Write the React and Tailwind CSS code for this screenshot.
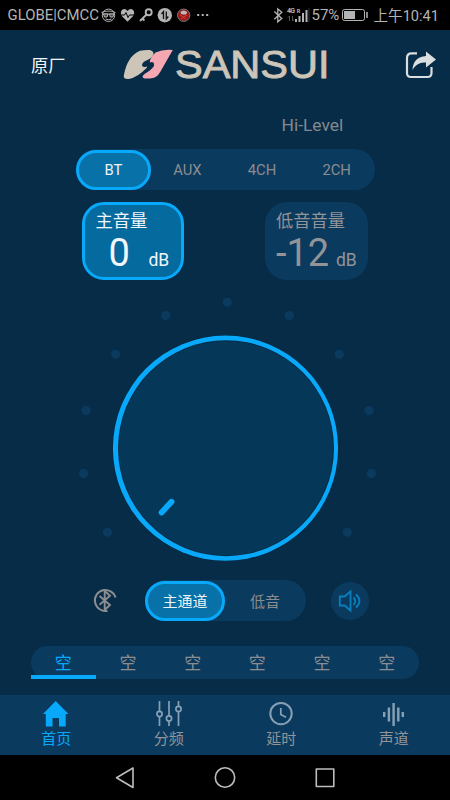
import React, { useState } from 'react';

const dots = [
  [227.3, 302.3], [165.7, 315.5], [289.3, 315.5], [115.7, 354.3], [339.3, 354.3],
  [86, 410.5], [369, 410.5], [83.5, 473.5], [371.3, 473.5], [107.5, 532.3], [347.3, 532.3],
];

function StatusBar() {
  return (
    <div className="h-[30px] bg-black text-[#b4b4b4] flex items-center pl-[7.5px] pr-[11px] leading-none">
      <span className="text-[14.9px] w-[92px] pt-px whitespace-nowrap">GLOBE|CMCC</span>
      <svg className="w-[110px] h-[30px]" viewBox="99.5 0 110 30" fill="none" stroke="#b4b4b4">
        <circle cx="108" cy="15.3" r="6.2" strokeWidth="1" />
        <path d="M101 12.5 Q108 9.5 115 12.5 M102 14h12" strokeWidth="1.2" />
        <path d="M103 14h4.4l-.8 3h-2.6zM109 14h4.4l-1 3h-2.6z" fill="#444" strokeWidth="1" />
        <path d="M105 19q3 1.4 6 0" />
        <path d="M127 21.8L121.3 16Q119.3 12.5 121.5 10Q124.5 7.6 127 11Q129.7 7.6 132.6 10Q134.7 12.5 132.7 16Z" fill="#b4b4b4" stroke="none" />
        <path d="M120 15h4l1.5-2.5 2 5 1.5-2.5h5" stroke="#000" />
        <circle cx="148.2" cy="12.2" r="3" strokeWidth="1.9" />
        <path d="M146 14.5L139.5 21M141.5 18.5l2.5 2" strokeWidth="1.9" />
        <circle cx="164.3" cy="15.2" r="7.2" fill="#b4b4b4" stroke="none" />
        <path d="M163 19v-7.5l-2 2.5M165.8 11.5v7.5l2-2.5" stroke="#111" strokeWidth="1.3" />
        <circle cx="183.2" cy="15.2" r="6.2" fill="#961d1d" stroke="#777" />
        <path d="M180 12q0 3 3.2 2.5Q186.5 15 186.5 12Q183.2 9 180 12Z" fill="#bbb" stroke="none" />
        <path d="M179.5 15l3.5 2 3.5-2M181 19l2-2 2 2" stroke="#e33b38" />
        <path d="M196.7 15h2M201.2 15h2M205.7 15h2" strokeWidth="1.8" />
      </svg>
      <svg className="w-[38px] ml-auto h-[30px]" viewBox="273 0 38 30" fill="none" stroke="#b4b4b4">
        <path d="M274.3 11.5l7.5 7-4 3.3V9l4 3.300-7.500 7" strokeWidth="1.3" />
        <text x="287" y="13.2" fontSize="7" fontWeight="bold" fill="#b4b4b4" stroke="none" textLength="8">4G</text>
        <text x="296.8" y="12.5" fontSize="5.5" fontWeight="bold" fill="#b4b4b4" stroke="none">R</text>
        <path d="M289.5 21v-5l-1.5 1.5M292.5 16v5l1.5-1.5" stroke="#555" />
        <path d="M296 22v-3M299.5 22v-6M303 22v-9M306.5 22v-12" strokeWidth="2" />
        <path d="M309 22V8" stroke="#333" strokeWidth="1" />
      </svg>
      <span className="text-[15px] w-[28px] pt-px whitespace-nowrap">57%</span>
      <svg className="w-[27px] h-[30px] ml-[2px]" viewBox="342 0 27 30" fill="none" stroke="#b4b4b4">
        <rect x="343.5" y="9.5" width="22" height="11" rx="2" />
        <path d="M345 11h11v8h-11z" fill="#b4b4b4" stroke="none" />
        <path d="M368 12v6" strokeWidth="1.5" />
      </svg>
      <span className="text-[14.6px] ml-[5px] pt-[3px] whitespace-nowrap">上午10:41</span>
    </div>
  );
}

function Header() {
  return (
    <header className="h-[70px] flex items-center pl-[31px] pr-[13px]">
      <span className="text-[17.2px] w-[92px] pt-[3px] text-[#f2f4f5]">原厂</span>
      <svg className="w-[210px] h-[44px] overflow-visible" viewBox="123 43 210 44">
        <path d="M140 50.7Q145 49.7 150 50Q154.5 51.5 153.3 55Q152 58 147.5 60Q142.5 61.5 142 65Q142.2 67.5 145 67Q148.5 65.5 146.5 68Q138 77 129 79Q122.5 79.5 124 74.5Q127.5 56 140 50.7Z" fill="#cdc5b8" />
        <path d="M155.5 52.5Q163 49 172.8 50Q167 60 160.5 71.5Q156.5 79 149 78.500H144.500Q140.5 77 144.5 74Q155.5 67.5 154 63.5Q153 61 150 62.5Q149 59 155.5 52.5Z" fill="#f5a8b1" />
        <text x="175" y="77.8" fontSize="39.5" fontFamily="Liberation Sans, sans-serif" fill="#cdc5b8" stroke="#cdc5b8" strokeWidth=".9" textLength="154.5" lengthAdjust="spacingAndGlyphs">SANSUI</text>
      </svg>
      <svg className="w-[32px] h-[30px] ml-auto" viewBox="405 50 32 30" fill="none">
        <path d="M417 53.3h-5.500Q407 53.300 407 58v15.300Q407 77 411 77h16.500Q431.500 77 431.500 73v-6" stroke="#d9dee1" strokeWidth="2.2" />
        <path d="M426 51.500L436 59.500L426 67.500V62.500Q417 61.500 412.500 70Q413 57 426 56Z" fill="#d9dee1" />
      </svg>
    </header>
  );
}

function VolumeCard({ label, value, active }) {
  return (
    <div className={active
      ? 'w-[102px] h-[78px] rounded-[22px] border-[3px] border-[#08a8fa] bg-[#056a9e] text-[#f3f6f8] pl-[10.5px]'
      : 'w-[103px] h-[78px] rounded-[22px] border-[3px] border-[#0b3a5f] bg-[#0b3a5f] text-[#929497] pl-[8px]'}>
      <div className="text-[17.3px] leading-[20px] mt-[6px] whitespace-nowrap">{label}</div>
      <div className="flex items-baseline leading-[42px] mt-[1px]">
        <span className={active ? 'text-[38px] pl-[13px] w-[53px]' : 'text-[38px] w-[60px] whitespace-nowrap'}>{value}</span>
        <span className="text-[17.5px]">dB</span>
      </div>
    </div>
  );
}

function Dial() {
  return (
    <svg className="block w-[450px] h-[300px]" viewBox="0 280 450 300">
      {dots.map(([x, y]) => <circle key={`${x}-${y}`} cx={x} cy={y} r="4.6" fill="#0b3a5f" />)}
      <circle cx="225.5" cy="448.2" r="113" fill="#05263d" />
      <circle cx="225.5" cy="448.2" r="112.6" fill="#08a8fa" />
      <circle cx="226" cy="448.2" r="108" fill="#052d49" />
      <circle cx="226" cy="448.2" r="107" fill="#053858" />
      <path d="M161.6 512.5L171.5 501.7" stroke="#08a8fa" strokeWidth="5.8" strokeLinecap="round" />
    </svg>
  );
}

function TabIcon({ name }) {
  if (name === '首页') {
    return (
      <svg className="w-[28px] h-[28px]" viewBox="0 0 28 28" fill="#08a8fa">
        <path d="M13.7 1L26.5 14H23.7V26.5H17V18H10.500V26.500H3.800V14H1Z" />
      </svg>
    );
  }
  if (name === '分频') {
    return (
      <svg className="w-[28px] h-[28px]" viewBox="0 0 28 28" fill="#0b3a5f" stroke="#86a0b5" strokeWidth="1.7">
        <path d="M4.5 1v25M14 1v25M23.5 1v25" />
        <circle cx="4.5" cy="14" r="2.6" />
        <circle cx="14" cy="18.5" r="2.6" />
        <circle cx="23.5" cy="9" r="2.6" />
      </svg>
    );
  }
  if (name === '延时') {
    return (
      <svg className="w-[28px] h-[28px]" viewBox="0 0 28 28" fill="none" stroke="#86a0b5" strokeWidth="2">
        <circle cx="14" cy="13.6" r="10.7" />
        <path d="M13.8 8v6.5l5.2 2.8" strokeWidth="1.7" />
      </svg>
    );
  }
  return (
    <svg className="w-[28px] h-[28px]" viewBox="0 0 28 28" stroke="#86a0b5" strokeWidth="2.4">
      <path d="M4.2 12v5M8.9 7.5v14M13.6 3v23M18.3 7.5v14M22.8 12v5" />
    </svg>
  );
}

function App() {
  const [source, setSource] = useState('BT');
  const [channel, setChannel] = useState('主通道');
  const [slot, setSlot] = useState(0);
  const [tab, setTab] = useState('首页');

  return (
    <div className="w-[450px] h-[800px] overflow-hidden bg-[#072c47] font-[Roboto,'Noto_Sans_CJK_SC',sans-serif]">
      <StatusBar />
      <Header />
      <div className="h-[49px] pl-[281.5px] pt-[13px] text-[17.4px] leading-[25px] text-[#85898e]">Hi-Level</div>

      <div className="ml-[76px] w-[299px] h-[41px] rounded-full bg-[#0b3a5f] flex">
        {['BT', 'AUX', '4CH', '2CH'].map(name => (
          <button
            key={name}
            onClick={() => setSource(name)}
            className={name === source
              ? 'w-[75px] h-[40px] mt-[.5px] pt-[2px] shrink-0 rounded-full border-[3px] border-[#08a8fa] bg-[#0871a8] text-[#eef3f6] text-[14.8px]'
              : 'flex-1 pt-[2px] pr-[2px] text-[#8b8d90] text-[14.8px]'}
          >
            {name}
          </button>
        ))}
      </div>

      <div className="flex gap-[81px] pl-[82px] mt-[12px]">
        <VolumeCard label="主音量" value="0" active />
        <VolumeCard label="低音音量" value="-12" />
      </div>

      <Dial />

      <div className="flex items-center h-[41px] pl-[93px]">
        <svg className="w-[25px] h-[25px]" viewBox="0 0 25 25" fill="none" stroke="#8b8d90" strokeWidth="2">
          <path d="M22.5 9.5A10.5 10.5 0 1 0 14.5 22.7" />
          <path d="M6.5 8l10.5 9-5.3 4.8V3l5.3 4.8-10.5 9" strokeWidth="1.9" />
        </svg>
        <div className="flex w-[161px] h-[41px] ml-[27px] rounded-full bg-[#0b3a5f]">
          {['主通道', '低音'].map(name => (
            <button
              key={name}
              onClick={() => setChannel(name)}
              className={name === channel
                ? 'w-[80px] h-[40px] mt-[.5px] pt-[3px] rounded-full border-[3px] border-[#08a8fa] bg-[#0871a8] text-[#eef3f6] text-[15px]'
                : 'w-[80px] pt-[3px] text-[#8b8d90] text-[15px]'}
            >
              {name}
            </button>
          ))}
        </div>
        <div className="w-[38px] h-[38px] ml-[25px] rounded-full bg-[#0b3a5f]">
          <svg viewBox="0 0 38 38" fill="none" stroke="#0a7fbd" strokeWidth="1.8">
            <path d="M8.8 14.5h4.7l6-5v19l-6-5H8.8z" />
            <path d="M22.5 15.5q3.5 3.5 0 7.5M25 12.5q7 6.500 0 13" />
          </svg>
        </div>
      </div>

      <div className="relative flex mt-[25px] ml-[31px] w-[388px] h-[33px] rounded-full bg-[#0b3a5f]">
        {[0, 1, 2, 3, 4, 5].map(i => (
          <button
            key={i}
            onClick={() => setSlot(i)}
            className={i === slot ? 'flex-1 pt-[2px] text-[17px] text-[#08a8fa]' : 'flex-1 pt-[2px] text-[17px] text-[#8b8d90]'}
          >
            空
          </button>
        ))}
        <div className="absolute top-[29px] w-[65px] h-[4px] bg-[#08a8fa]" style={{ left: slot * 64.7 }} />
      </div>

      <nav className="flex mt-[16px] h-[60px] bg-[#0b3a5f]">
        {['首页', '分频', '延时', '声道'].map(name => (
          <button
            key={name}
            onClick={() => setTab(name)}
            className={name === tab
              ? 'flex-1 flex flex-col items-center pt-[5px] text-[15px] leading-[23px] text-[#08a8fa]'
              : 'flex-1 flex flex-col items-center pt-[5px] text-[15px] leading-[23px] text-[#929497]'}
          >
            <TabIcon name={name} />
            {name}
          </button>
        ))}
      </nav>

      <div className="h-[45px] bg-black">
        <svg className="w-[450px] h-[45px]" viewBox="0 755 450 45" fill="none" stroke="#bdbdbd" strokeWidth="1.6" strokeLinejoin="round">
          <path d="M133 768v19.5L116.5 777.7z" />
          <circle cx="225" cy="777.5" r="9.7" />
          <path d="M316.3 769h17.5v17.5h-17.5z" />
        </svg>
      </div>
    </div>
  );
}

export default App;
